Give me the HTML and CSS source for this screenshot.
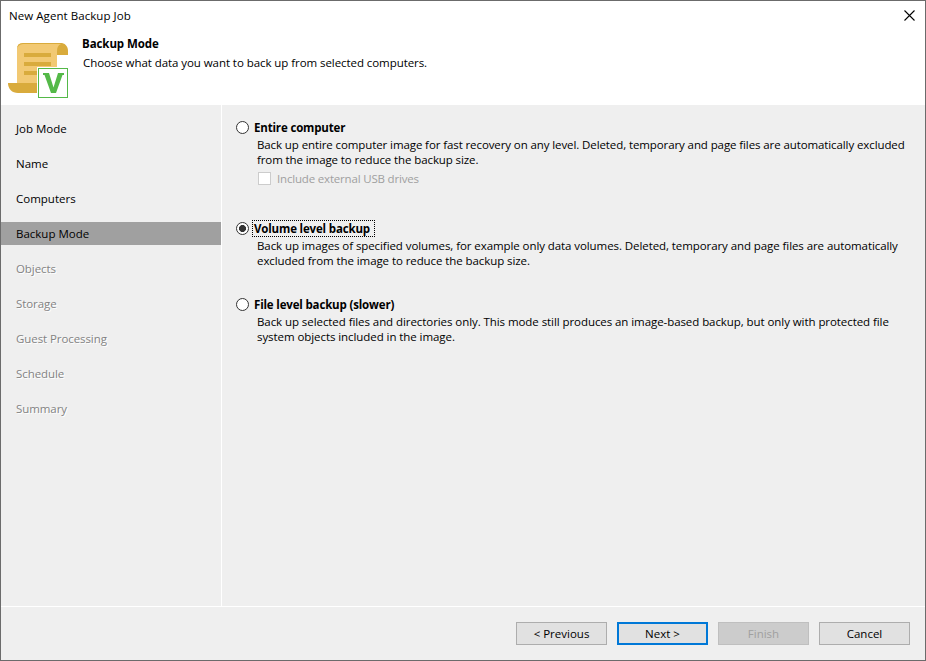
FILE: index.html
```html
<!DOCTYPE html>
<html lang="en">
<head>
  <meta charset="UTF-8" />
  <title>New Agent Backup Job</title>
  <link rel="stylesheet" href="styles.css">
</head>
<body>
  <div class="window">
    <header>
      <div class="titlebar">
        <span class="window-title">New Agent Backup Job</span>
        <svg class="close" width="11" height="11" viewBox="0 0 11 11">
          <path d="M0.5 0.5L10.5 10.5M10.5 0.5L0.5 10.5" stroke="#000" stroke-width="1.1" />
        </svg>
      </div>
      <div class="heading">
        <svg class="job-icon" width="62" height="59" viewBox="0 0 62 59">
          <path d="M9 43V9Q9 3 15 3H54L49 11V48H20L9 43Z" fill="#f2c973" />
          <path d="M9 9Q9 3 15 3H54C58 4 60 7 60 11V15H49V11C49 8 50 5 53 4H15Q10 4.500 9 9Z" fill="#d9ab3c" />
          <path d="M0 43H29V53H10C4 53 0 49 0 43Z" fill="#d9ab3c" />
          <path d="M16 13H43V17H16ZM16 22H43V26H16ZM16 31H43V35H16Z" fill="#d9ab3c" />
          <rect x="29" y="27" width="32" height="32" fill="#fff" />
          <rect x="30.500" y="28.500" width="29" height="29" fill="#fff" stroke="#54b948" />
          <path d="M35 33H41L45.500 47.500L50 33H56V35H54.500L48 53H43L36.500 35H35Z" fill="#54b948" />
        </svg>
        <div class="heading-text">
          <h1>Backup Mode</h1>
          <p>Choose what data you want to back up from selected computers.</p>
        </div>
      </div>
    </header>

    <div class="main">
      <ul class="steps">
        <li>Job Mode</li>
        <li>Name</li>
        <li>Computers</li>
        <li class="active">Backup Mode</li>
        <li class="disabled">Objects</li>
        <li class="disabled">Storage</li>
        <li class="disabled">Guest Processing</li>
        <li class="disabled">Schedule</li>
        <li class="disabled">Summary</li>
      </ul>

      <form class="modes">
        <div class="mode entire">
          <label class="mode-name"><input type="radio" name="mode"><span>Entire computer</span></label>
          <p>Back up entire computer image for fast recovery on any level. Deleted, temporary and page files are automatically excluded<br>
          from the image to reduce the backup size.</p>
          <label class="usb"><input type="checkbox" disabled><span>Include external USB drives</span></label>
        </div>
        <div class="mode volume">
          <label class="mode-name focused"><input type="radio" name="mode" checked><span>Volume level backup</span></label>
          <p>Back up images of specified volumes, for example only data volumes. Deleted, temporary and page files are automatically<br>
          excluded from the image to reduce the backup size.</p>
        </div>
        <div class="mode file">
          <label class="mode-name"><input type="radio" name="mode"><span>File level backup (slower)</span></label>
          <p>Back up selected files and directories only. This mode still produces an image-based backup, but only with protected file<br>
          system objects included in the image.</p>
        </div>
      </form>
    </div>

    <footer>
      <button type="button">&lt; Previous</button>
      <button type="button" class="default">Next &gt;</button>
      <button type="button" disabled>Finish</button>
      <button type="button">Cancel</button>
    </footer>
  </div>
</body>
</html>
```

FILE: styles.css
```css
* {
  box-sizing: border-box;
}
body {
  margin: 0;
  font-family: "Open Sans", "Noto Sans", sans-serif;
  font-size: 11.5px;
  line-height: 15px;
  color: #000;
}
h1, p, ul {
  margin: 0;
  padding: 0;
}
.window {
  display: flex;
  flex-direction: column;
  width: 926px;
  height: 661px;
  border: 1px solid #6b6b6b;
  background-color: #efefef;
}
header {
  height: 104px;
  background-color: #fff;
}
.titlebar {
  display: flex;
  justify-content: space-between;
  padding: 7px 10px 0 8px;
}
.window-title {
  letter-spacing: 0.06px;
}
.close {
  margin-top: 2px;
}
.heading {
  display: flex;
  padding: 13px 0 0 7px;
}
.job-icon {
  margin-top: 4px;
}
.heading-text {
  padding-left: 12px;
}
h1 {
  font-size: 11.5px;
  line-height: 15px;
  font-weight: bold;
  letter-spacing: -0.08px;
}
.heading-text p {
  margin-top: 4px;
  padding-left: 1px;
  letter-spacing: -0.065px;
}
.main {
  display: flex;
  height: 501px;
}
.steps {
  display: flex;
  flex-direction: column;
  gap: 12px;
  width: 221px;
  padding-top: 12px;
  border-right: 1px solid #fff;
  list-style: none;
}
.steps li {
  height: 23px;
  padding-left: 15px;
  line-height: 23px;
}
.steps .active {
  background-color: #a0a0a0;
}
.steps .disabled {
  color: #838383;
  text-shadow: 1px 1px 0 #fff;
  letter-spacing: -0.08px;
}
.modes {
  flex: 1;
  padding: 15px 0 0 14px;
}
.mode p {
  padding: 2px 0 0 21px;
  white-space: nowrap;
}
.entire p {
  letter-spacing: -0.1px;
}
.volume p {
  letter-spacing: -0.08px;
}
.file p {
  letter-spacing: -0.07px;
}
.mode-name {
  display: flex;
  align-items: center;
  height: 15px;
  font-weight: bold;
  letter-spacing: -0.16px;
}
.mode-name span {
  padding: 0 4px 0 2px;
  margin-left: 3px;
}
.focused span {
  margin-left: 4px;
  padding: 0 4px 0 1px;
  outline: 1px dotted #000;
}
input {
  appearance: none;
  flex: none;
  width: 13px;
  height: 13px;
  margin: 0;
  border: 1px solid #333;
  background-color: #fff;
}
input[type="radio"] {
  border-radius: 50%;
}
input[type="radio"]:checked {
  background: radial-gradient(circle, #333 3.2px, #fff 3.8px);
}
.usb {
  display: flex;
  align-items: center;
  gap: 6px;
  padding: 4px 0 0 22px;
  color: #a0a0a0;
  letter-spacing: -0.18px;
}
.usb input {
  border-color: #ccc;
}
.entire {
  margin-bottom: 35px;
}
.volume {
  margin-bottom: 29px;
}
footer {
  display: flex;
  flex: 1;
  justify-content: flex-end;
  gap: 10px;
  padding: 15px 15px 0 0;
  border-top: 1px solid #fff;
}
button {
  width: 91px;
  height: 23px;
  padding: 0;
  border: 1px solid #adadad;
  background-color: #e1e1e1;
  font: inherit;
  color: #000;
}
button.default {
  border: 2px solid #0078d7;
}
button:disabled {
  border-color: #bfbfbf;
  background-color: #ccc;
  color: #a0a0a0;
}
```
